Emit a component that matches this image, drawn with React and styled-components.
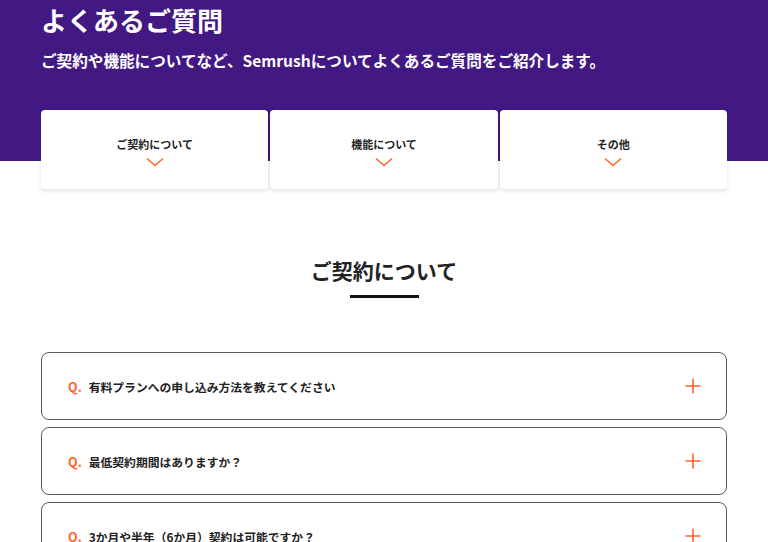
import React from 'react';
import styled, { createGlobalStyle } from 'styled-components';

const GlobalStyle = createGlobalStyle`
  body {
    margin: 0;
    background: #fff;
    font-family: "Noto Sans CJK JP", "Noto Sans", sans-serif;
  }
`;

const Page = styled.div`
  background: linear-gradient(#421983 0 161px, #fff 161px);
  padding: 0 41px 40px;
  min-height: 542px;
  box-sizing: border-box;
`;

const Title = styled.h1`
  margin: 0;
  padding-top: 2px;
  font-size: 26px;
  line-height: 36px;
  font-weight: 700;
  color: #fff;
`;

const Lead = styled.p`
  margin: 10px 0 0;
  font-size: 15.6px;
  line-height: 24px;
  font-weight: 700;
  color: #fff;
`;

const CardRow = styled.div`
  display: grid;
  grid-template-columns: repeat(3, 1fr);
  gap: 2px;
  margin-top: 38px;
`;

const Card = styled.a`
  height: 79px;
  background: #fff;
  border-radius: 4px;
  box-shadow: 0 2px 4px rgba(0, 0, 0, 0.12);
  display: flex;
  flex-direction: column;
  align-items: center;
  justify-content: center;
  padding-top: 3px;
  box-sizing: border-box;
  cursor: pointer;
`;

const CardLabel = styled.span`
  font-size: 11px;
  line-height: 16px;
  font-weight: 700;
  color: #222;
`;

const Chevron = styled.svg`
  margin-top: 5px;
  display: block;
`;

const Section = styled.section`
  display: flex;
  flex-direction: column;
  align-items: center;
  margin-top: 65px;
`;

const SectionTitle = styled.h2`
  margin: 0;
  font-size: 21px;
  line-height: 32px;
  font-weight: 700;
  color: #222;
`;

const Underline = styled.span`
  display: block;
  width: 69px;
  height: 3px;
  background: #111;
  margin-top: 9px;
`;

const FaqList = styled.div`
  display: flex;
  flex-direction: column;
  gap: 7px;
  margin-top: 54px;
`;

const FaqItem = styled.div`
  height: 68px;
  border: 1px solid #5a5a5a;
  border-radius: 8px;
  box-sizing: border-box;
  display: flex;
  align-items: center;
  padding: 0 25px 0 26px;
`;

const Q = styled.span`
  color: #ff642d;
  font-size: 12.5px;
  font-weight: 700;
  margin-right: 7px;
`;

const Question = styled.span`
  flex: 1;
  font-size: 11.8px;
  font-weight: 700;
  color: #222;
`;

const ChevronIcon = () => (
  <Chevron width="18" height="10" viewBox="0 0 18 10">
    <path d="M1 1.5 L9 8.5 L17 1.5" fill="none" stroke="#ff642d" strokeWidth="1.6" />
  </Chevron>
);

const PlusIcon = () => (
  <svg width="16" height="16" viewBox="0 0 16 16">
    <path d="M8 0.5 V15.5 M0.5 8 H15.5" stroke="#ff642d" strokeWidth="1.6" fill="none" />
  </svg>
);

const categories = ['ご契約について', '機能について', 'その他'];

const questions = [
  '有料プランへの申し込み方法を教えてください',
  '最低契約期間はありますか？',
  '3か月や半年（6か月）契約は可能ですか？',
];

const App = () => {
  return (
    <Page>
      <GlobalStyle />
      <Title>よくあるご質問</Title>
      <Lead>ご契約や機能についてなど、Semrushについてよくあるご質問をご紹介します。</Lead>
      <CardRow>
        {categories.map((c) => (
          <Card key={c}>
            <CardLabel>{c}</CardLabel>
            <ChevronIcon />
          </Card>
        ))}
      </CardRow>
      <Section>
        <SectionTitle>ご契約について</SectionTitle>
        <Underline />
      </Section>
      <FaqList>
        {questions.map((q) => (
          <FaqItem key={q}>
            <Q>Q.</Q>
            <Question>{q}</Question>
            <PlusIcon />
          </FaqItem>
        ))}
      </FaqList>
    </Page>
  );
};

export default App;
